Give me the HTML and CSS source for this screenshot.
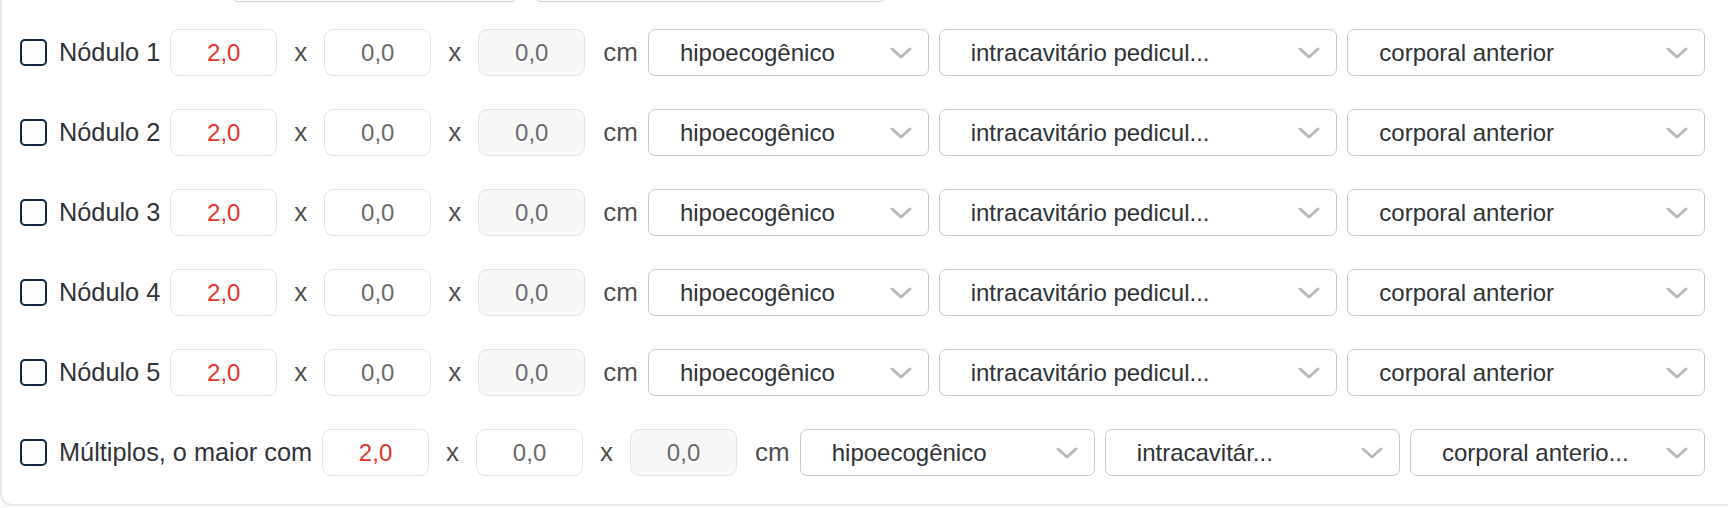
FILE: index.html
```html
<!DOCTYPE html>
<html lang="pt-BR">
<head>
<meta charset="utf-8">
<title>Nódulos</title>
<link rel="stylesheet" href="styles.css">
</head>
<body>
<div class="card">
  <div class="prev-row">
    <div class="prev-box prev-a"></div>
    <div class="prev-box prev-b"></div>
  </div>
  <div class="rows">
    <div class="row">
      <input class="check" type="checkbox">
      <span class="label">Nódulo 1</span>
      <input class="num num-main" type="text" value="2,0" readonly>
      <span class="times">x</span>
      <input class="num" type="text" value="0,0" readonly>
      <span class="times">x</span>
      <input class="num num-off" type="text" value="0,0" readonly>
      <span class="unit">cm</span>
      <div class="sel sel-a"><span class="sel-text">hipoecogênico</span><svg class="chev" viewBox="0 0 22 12"><polyline points="2,2 11,10 20,2"/></svg></div>
      <div class="sel sel-b"><span class="sel-text">intracavitário pedicul...</span><svg class="chev" viewBox="0 0 22 12"><polyline points="2,2 11,10 20,2"/></svg></div>
      <div class="sel sel-c"><span class="sel-text">corporal anterior</span><svg class="chev" viewBox="0 0 22 12"><polyline points="2,2 11,10 20,2"/></svg></div>
    </div>
    <div class="row">
      <input class="check" type="checkbox">
      <span class="label">Nódulo 2</span>
      <input class="num num-main" type="text" value="2,0" readonly>
      <span class="times">x</span>
      <input class="num" type="text" value="0,0" readonly>
      <span class="times">x</span>
      <input class="num num-off" type="text" value="0,0" readonly>
      <span class="unit">cm</span>
      <div class="sel sel-a"><span class="sel-text">hipoecogênico</span><svg class="chev" viewBox="0 0 22 12"><polyline points="2,2 11,10 20,2"/></svg></div>
      <div class="sel sel-b"><span class="sel-text">intracavitário pedicul...</span><svg class="chev" viewBox="0 0 22 12"><polyline points="2,2 11,10 20,2"/></svg></div>
      <div class="sel sel-c"><span class="sel-text">corporal anterior</span><svg class="chev" viewBox="0 0 22 12"><polyline points="2,2 11,10 20,2"/></svg></div>
    </div>
    <div class="row">
      <input class="check" type="checkbox">
      <span class="label">Nódulo 3</span>
      <input class="num num-main" type="text" value="2,0" readonly>
      <span class="times">x</span>
      <input class="num" type="text" value="0,0" readonly>
      <span class="times">x</span>
      <input class="num num-off" type="text" value="0,0" readonly>
      <span class="unit">cm</span>
      <div class="sel sel-a"><span class="sel-text">hipoecogênico</span><svg class="chev" viewBox="0 0 22 12"><polyline points="2,2 11,10 20,2"/></svg></div>
      <div class="sel sel-b"><span class="sel-text">intracavitário pedicul...</span><svg class="chev" viewBox="0 0 22 12"><polyline points="2,2 11,10 20,2"/></svg></div>
      <div class="sel sel-c"><span class="sel-text">corporal anterior</span><svg class="chev" viewBox="0 0 22 12"><polyline points="2,2 11,10 20,2"/></svg></div>
    </div>
    <div class="row">
      <input class="check" type="checkbox">
      <span class="label">Nódulo 4</span>
      <input class="num num-main" type="text" value="2,0" readonly>
      <span class="times">x</span>
      <input class="num" type="text" value="0,0" readonly>
      <span class="times">x</span>
      <input class="num num-off" type="text" value="0,0" readonly>
      <span class="unit">cm</span>
      <div class="sel sel-a"><span class="sel-text">hipoecogênico</span><svg class="chev" viewBox="0 0 22 12"><polyline points="2,2 11,10 20,2"/></svg></div>
      <div class="sel sel-b"><span class="sel-text">intracavitário pedicul...</span><svg class="chev" viewBox="0 0 22 12"><polyline points="2,2 11,10 20,2"/></svg></div>
      <div class="sel sel-c"><span class="sel-text">corporal anterior</span><svg class="chev" viewBox="0 0 22 12"><polyline points="2,2 11,10 20,2"/></svg></div>
    </div>
    <div class="row">
      <input class="check" type="checkbox">
      <span class="label">Nódulo 5</span>
      <input class="num num-main" type="text" value="2,0" readonly>
      <span class="times">x</span>
      <input class="num" type="text" value="0,0" readonly>
      <span class="times">x</span>
      <input class="num num-off" type="text" value="0,0" readonly>
      <span class="unit">cm</span>
      <div class="sel sel-a"><span class="sel-text">hipoecogênico</span><svg class="chev" viewBox="0 0 22 12"><polyline points="2,2 11,10 20,2"/></svg></div>
      <div class="sel sel-b"><span class="sel-text">intracavitário pedicul...</span><svg class="chev" viewBox="0 0 22 12"><polyline points="2,2 11,10 20,2"/></svg></div>
      <div class="sel sel-c"><span class="sel-text">corporal anterior</span><svg class="chev" viewBox="0 0 22 12"><polyline points="2,2 11,10 20,2"/></svg></div>
    </div>
    <div class="row">
      <input class="check" type="checkbox">
      <span class="label">Múltiplos, o maior com</span>
      <input class="num num-main" type="text" value="2,0" readonly>
      <span class="times">x</span>
      <input class="num" type="text" value="0,0" readonly>
      <span class="times">x</span>
      <input class="num num-off" type="text" value="0,0" readonly>
      <span class="unit">cm</span>
      <div class="sel sel-eq"><span class="sel-text">hipoecogênico</span><svg class="chev" viewBox="0 0 22 12"><polyline points="2,2 11,10 20,2"/></svg></div>
      <div class="sel sel-eq"><span class="sel-text">intracavitár...</span><svg class="chev" viewBox="0 0 22 12"><polyline points="2,2 11,10 20,2"/></svg></div>
      <div class="sel sel-eq"><span class="sel-text">corporal anterio...</span><svg class="chev" viewBox="0 0 22 12"><polyline points="2,2 11,10 20,2"/></svg></div>
    </div>
  </div>
</div>
</body>
</html>
```
FILE: styles.css
```css
html, body {
  margin: 0;
  padding: 0;
  background: #ffffff;
  overflow: hidden;
}

body {
  font-family: "Liberation Sans", Arial, Helvetica, sans-serif;
  color: #2f3336;
}

.card {
  box-sizing: border-box;
  width: 1728px;
  border-left: 2px solid #e6e9ef;
  border-bottom: 2px solid #e6e9ef;
  border-bottom-left-radius: 12px;
  padding: 0 23px 28px 16px;
}

.prev-row {
  display: flex;
  align-items: flex-start;
  gap: 16px;
  height: 2px;
  padding-left: 213px;
}

.prev-box {
  box-sizing: border-box;
  height: 40px;
  margin-top: -38px;
  border: 1.5px solid #cfd2d6;
  border-radius: 7px;
}

.prev-a { width: 287px; }
.prev-b { width: 353px; }

.rows {
  display: flex;
  flex-direction: column;
  gap: 33px;
  margin-top: 27px;
}

.row {
  display: flex;
  align-items: center;
  gap: 10px;
  height: 47px;
}

.check {
  appearance: none;
  -webkit-appearance: none;
  box-sizing: border-box;
  flex: none;
  width: 27px;
  height: 27px;
  margin: 0 2px 0 2px;
  border: 2px solid #10253f;
  border-radius: 5px;
  background: #ffffff;
}

.label {
  flex: none;
  font-size: 25.3px;
  color: #303438;
  white-space: nowrap;
}

.num {
  box-sizing: border-box;
  flex: none;
  width: 107px;
  height: 47px;
  border: 1.5px solid #e1e5ec;
  border-radius: 9px;
  background: #ffffff;
  font-family: "Liberation Sans", Arial, sans-serif;
  font-size: 24px;
  color: #6b6b6b;
  text-align: center;
  padding: 0;
  outline: none;
}

.num-main {
  color: #e5332a;
}

.num-off {
  background: #f7f7f8;
}

.times {
  flex: none;
  font-size: 26px;
  color: #505050;
  padding: 0 7px;
}

.unit {
  flex: none;
  font-size: 26px;
  color: #505050;
  margin-left: 8px;
}

.sel {
  box-sizing: border-box;
  height: 47px;
  display: flex;
  align-items: center;
  justify-content: space-between;
  border: 1.5px solid #cbcbcb;
  border-radius: 7px;
  background: #ffffff;
  padding: 0 16px 0 31px;
  min-width: 0;
}

.sel-a { flex: 281 1 281px; }
.sel-b { flex: 399 1 399px; }
.sel-c { flex: 358 1 358px; }
.sel-eq { flex: 1 1 0; }

.sel-text {
  font-size: 24px;
  color: #2f3336;
  white-space: nowrap;
  overflow: hidden;
}

.chev {
  flex: none;
  width: 22px;
  height: 12px;
  fill: none;
  stroke: #b9b9b9;
  stroke-width: 3;
  stroke-linecap: round;
  stroke-linejoin: round;
}
```
